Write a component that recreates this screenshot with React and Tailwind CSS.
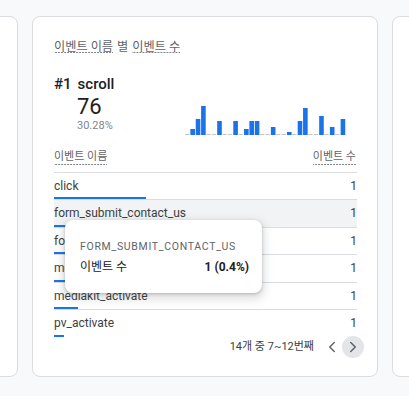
import { ChevronLeft, ChevronRight } from 'lucide-react';

const BARS = [0, 6, 16, 29, 0, 0, 14, 0, 0, 14, 0, 6, 14, 14, 0, 0, 8, 0, 0, 3, 0, 14, 27, 0, 0, 19, 0, 8, 0, 16];

const ROWS = [
  { name: 'click', value: 1, bar: 92 },
  { name: 'form_submit_contact_us', value: 1, bar: 12, active: true },
  { name: 'form_submit_media_kit', value: 1, bar: 12 },
  { name: 'mediakit_download', value: 1, bar: 12 },
  { name: 'mediakit_activate', value: 1, bar: 24 },
  { name: 'pv_activate', value: 1, bar: 10 },
];

const dashed =
  'inline-block bg-[linear-gradient(to_right,#80868b_2px,transparent_2px)] bg-[length:3px_1px] bg-repeat-x bg-bottom';

function Sparkline() {
  const step = 161 / BARS.length;
  return (
    <svg width="162" height="30" viewBox="0 0 162 30" className="block">
      {BARS.map((h, i) =>
        h > 0 ? (
          <rect key={i} x={i * step} y={30 - h} width={4.6} height={h} fill="#1a73e8" />
        ) : (
          <rect key={i} x={i * step} y={29} width={4.2} height={1} fill="#c4c7c9" />
        )
      )}
    </svg>
  );
}

export default function App() {
  return (
    <div className="min-h-screen overflow-hidden bg-[#f8f9fa] pt-4 font-[Roboto,'Noto_Sans_CJK_KR',sans-serif]">
      <div className="ml-[-328px] flex gap-[14px]">
        <div className="h-[361px] w-[346px] shrink-0 rounded-lg border border-[#dadce0] bg-white" />

        <div className="relative h-[361px] w-[346px] shrink-0 rounded-lg border border-[#dadce0] bg-white pl-[21px] pr-[20px] pt-[20px]">
          {/* title */}
          <div className="flex h-[20px] items-center text-[12.2px] text-[#5f6368]">
            <span className={`${dashed} leading-[12px]`}>이벤트 이름</span>
            <span className="mx-[4px] leading-[12px]">별</span>
            <span className={`${dashed} leading-[12px]`}>이벤트 수</span>
          </div>

          {/* top item */}
          <div className="mt-[17px] flex h-[20px] items-center text-[15px] font-medium text-[#202124]">
            <span>#1</span>
            <span className="ml-[6px]">scroll</span>
          </div>
          <div className="flex items-start">
            <div className="w-[131px] pl-[23px]">
              <div className="text-[22px] leading-[26px] text-[#202124]">76</div>
              <div className="mt-[-1px] text-[11px] leading-[14px] text-[#80868b]">30.28%</div>
            </div>
            <div className="mt-[11px]">
              <Sparkline />
            </div>
          </div>

          {/* table header */}
          <div className="flex justify-between border-b border-[#dadce0] pb-[7px] pt-[14px] text-[11px] leading-[16px] text-[#5f6368]">
            <span className={dashed}>이벤트 이름</span>
            <span className={`${dashed} mr-[1px]`}>이벤트 수</span>
          </div>

          {ROWS.map((r, i) => (
            <div
              key={r.name}
              className={`flex h-[27.4px] flex-col justify-between pt-[5px] ${
                i < ROWS.length - 1 ? 'border-b border-[#dadce0]' : ''
              } ${r.active ? 'bg-[#f1f3f4]' : ''}`}
            >
              <div className="flex justify-between text-[12px] leading-[16px] text-[#3c4043]">
                <span>{r.name}</span>
                <span>{r.value}</span>
              </div>
              <div className="h-[2px] bg-[#1a73e8]" style={{ width: r.bar }} />
            </div>
          ))}

          {/* pagination */}
          <div className="mr-[-7px] mt-[-1px] flex h-[22px] items-center justify-end">
            <span className="text-[11px] text-[#3c4043]">14개 중 7~12번째</span>
            <button className="ml-[7px] flex h-[22px] w-[22px] items-center justify-center rounded-full text-[#5f6368]">
              <ChevronLeft size={18} strokeWidth={2} />
            </button>
            <button className="ml-[-1px] flex h-[22px] w-[22px] items-center justify-center rounded-full bg-[#e3e5e8] text-[#5f6368]">
              <ChevronRight size={18} strokeWidth={2} />
            </button>
          </div>

          {/* tooltip */}
          <div className="absolute left-[32px] top-[203px] h-[73px] w-[197px] rounded-lg bg-white pl-[15px] pr-[13px] pt-[19px] shadow-[0_1px_3px_rgba(60,64,67,0.3),0_4px_8px_3px_rgba(60,64,67,0.15)]">
            <div className="text-[10.5px] leading-[16px] tracking-[0.7px] text-[#5f6368]">FORM_SUBMIT_CONTACT_US</div>
            <div className="mt-[4px] flex justify-between text-[12px] leading-[16px] text-[#202124]">
              <span>이벤트 수</span>
              <span className="font-bold">1 (0.4%)</span>
            </div>
          </div>
        </div>

        <div className="h-[361px] w-[346px] shrink-0 rounded-lg border border-[#dadce0] bg-white" />
      </div>
    </div>
  );
}
